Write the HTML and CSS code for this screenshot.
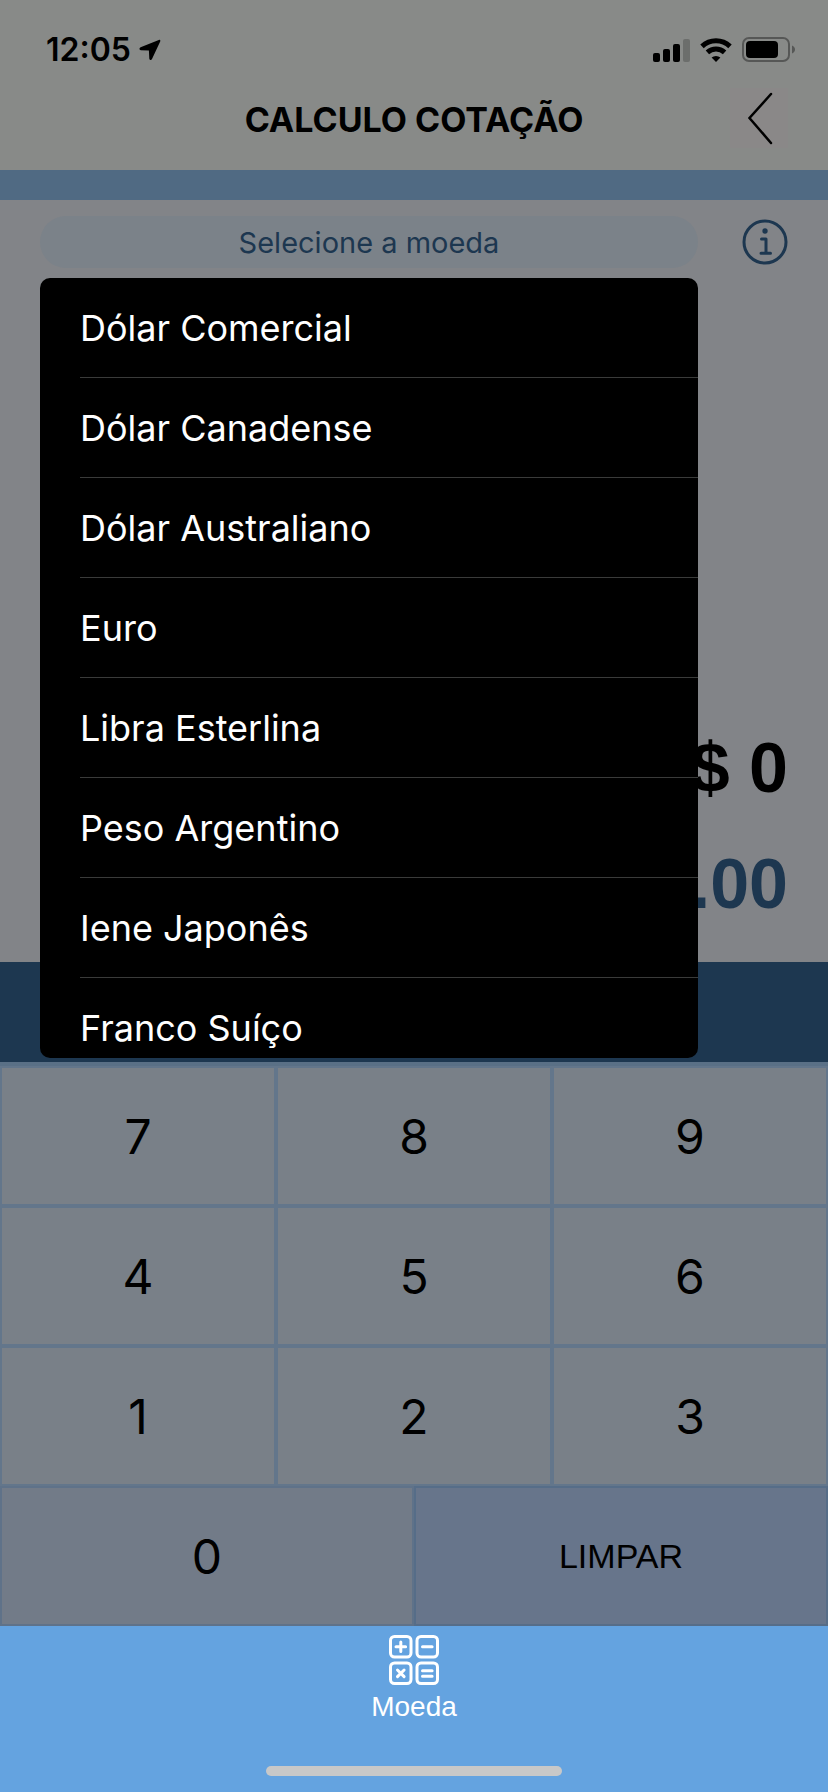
FILE: index.html
```html
<!DOCTYPE html>
<html lang="pt-BR">
<head>
<meta charset="utf-8">
<meta name="viewport" content="width=device-width, initial-scale=1">
<title>Calculo Cotação</title>
<link rel="stylesheet" href="styles.css">
</head>
<body>
<div class="app">
  <header class="header">
    <div class="status">
      <div class="status-left">
        <span class="clock">12:05</span>
        <svg class="location" viewBox="0 0 22 22" aria-hidden="true"><path d="M19.800.900 1.600 8.300c-1.700.8-1.400 2.800.3 2.900l8 .3.400 8c.1 1.800 2.100 2 2.700.4L21.200 2.400c.5-1.200-.3-2-1.400-1.500z"/></svg>
      </div>
      <div class="status-right">
        <svg class="signal" viewBox="0 0 37 24" aria-hidden="true"><rect x="0" y="15" width="7" height="9" rx="2"/><rect x="10" y="11" width="7" height="13" rx="2"/><rect x="20" y="6" width="7" height="18" rx="2"/><rect class="faint" x="30" y="1" width="7" height="23" rx="2"/></svg>
        <svg class="wifi" viewBox="0 0 32 24" aria-hidden="true"><path class="arc" d="M2 8.300a20.500 20.500 0 0 1 28 0M7.400 14.400a12.600 12.600 0 0 1 17.200 0"/><path d="M16 24l-4.400-4.400a6.500 6.500 0 0 1 8.800 0z"/></svg>
        <svg class="battery" viewBox="0 0 54 26" aria-hidden="true"><rect class="shell" x="1" y="1" width="46" height="23" rx="6"/><rect x="4" y="4" width="32" height="17" rx="4"/><path class="cap" d="M50 8.500c4 1.500 4 6.500 0 8z"/></svg>
      </div>
    </div>
    <div class="navbar">
      <h1 class="title">CALCULO COTAÇÃO</h1>
      <button class="back" type="button" aria-label="Voltar">
        <svg viewBox="0 0 58 60" aria-hidden="true"><path d="M41 6 19.500 30 41 55"/></svg>
      </button>
    </div>
  </header>
  <div class="band"></div>

  <main class="main">
    <section class="quote">
      <div class="picker-row">
        <div class="picker">
          <button class="picker-button" type="button" aria-haspopup="listbox" aria-expanded="true" aria-controls="moedas">Selecione a moeda</button>
          <ul class="options" id="moedas" role="listbox" aria-label="Moedas">
            <li class="option" role="option">Dólar Comercial</li>
            <li class="option" role="option">Dólar Canadense</li>
            <li class="option" role="option">Dólar Australiano</li>
            <li class="option" role="option">Euro</li>
            <li class="option" role="option">Libra Esterlina</li>
            <li class="option" role="option">Peso Argentino</li>
            <li class="option" role="option">Iene Japonês</li>
            <li class="option" role="option">Franco Suíço</li>
          </ul>
        </div>
        <button class="info" type="button" aria-label="Informações">
          <svg viewBox="0 0 46 46" aria-hidden="true"><circle class="ring" cx="23" cy="23" r="21"/><circle class="dot" cx="23" cy="12" r="2.700"/><path class="stem" d="M19.500 20H24v14.200M19 34.200h9.500"/></svg>
        </button>
      </div>
      <div class="amounts">
        <output class="amount">$ 0</output>
        <output class="amount amount-result">.00</output>
      </div>
    </section>
    <div class="divider"></div>
    <section class="keypad" aria-label="Teclado">
      <button class="key" type="button">7</button>
      <button class="key" type="button">8</button>
      <button class="key" type="button">9</button>
      <button class="key" type="button">4</button>
      <button class="key" type="button">5</button>
      <button class="key" type="button">6</button>
      <button class="key" type="button">1</button>
      <button class="key" type="button">2</button>
      <button class="key" type="button">3</button>
      <button class="key key-zero" type="button">0</button>
      <button class="key key-clear" type="button">LIMPAR</button>
    </section>
  </main>

  <nav class="tabbar">
    <a class="tab" href="#moeda">
      <svg class="tab-icon" viewBox="0 0 50 50" aria-hidden="true"><rect x="1.500" y="1.500" width="20.500" height="20.500" rx="4"/><rect x="28" y="1.500" width="20.500" height="20.500" rx="4"/><rect x="1.500" y="28" width="20.500" height="20.500" rx="4"/><rect x="28" y="28" width="20.500" height="20.500" rx="4"/><path d="M7 11.800h9.600M11.800 7v9.600M33.500 11.800h9.600M8.500 35l6.600 6.600M15.100 35l-6.600 6.600M33.500 35.700h9.600M33.500 41.300h9.600"/></svg>
      <span>Moeda</span>
    </a>
    <div class="home"></div>
  </nav>
</div>
</body>
</html>
```
FILE: styles.css
```css
* { box-sizing: border-box; }

body {
  margin: 0;
  background: #64a3e0;
  color: #000;
  font-family: Inter, "Liberation Sans", sans-serif;
}

button {
  margin: 0;
  padding: 0;
  border: 0;
  background: none;
  color: inherit;
  font: inherit;
  cursor: pointer;
}

svg { display: block; }

.app {
  display: flex;
  flex-direction: column;
  min-height: 100vh;
}

.header {
  padding-bottom: 18px;
  background: #888a88;
}

.status {
  display: flex;
  justify-content: space-between;
  padding: 30px 32px 0 46px;
  height: 88px;
}

.status-left,
.status-right {
  display: flex;
  align-items: center;
  height: 40px;
}

.status-left { gap: 8px; }
.status-right { gap: 10px; }

.clock {
  font-size: 32px;
  line-height: 40px;
  font-weight: 600;
}

.location { width: 22px; height: 22px; }
.signal { width: 37px; height: 24px; }
.signal .faint { fill: #6c6e6c; }
.wifi { width: 32px; height: 24px; }
.wifi .arc { fill: none; stroke: #000; stroke-width: 5; }
.battery { width: 54px; height: 26px; }
.battery .shell { fill: none; stroke: #565756; stroke-width: 2; }
.battery .cap { fill: #565756; }

.navbar {
  display: grid;
  grid-template-columns: 1fr auto 1fr;
  align-items: start;
  padding: 0 40px;
}

.title {
  grid-column: 2;
  margin: 0;
  font-size: 34px;
  line-height: 64px;
  font-weight: 700;
}

.back {
  justify-self: end;
  width: 58px;
  height: 60px;
  background: #8a8888;
}

.back svg {
  width: 58px;
  height: 60px;
  fill: none;
  stroke: #000;
  stroke-width: 2.500;
  stroke-linecap: round;
}

.band {
  height: 30px;
  background: #506a83;
}

.main {
  display: flex;
  flex: 1;
  flex-direction: column;
}

.quote {
  display: flex;
  flex: 1;
  flex-direction: column;
  justify-content: space-between;
  padding: 16px 40px 20px;
  background: #828488;
}

.picker-row {
  display: flex;
  align-items: center;
  gap: 44px;
}

.picker {
  position: relative;
  flex: 1;
}

.picker-button {
  display: block;
  width: 100%;
  height: 52px;
  border-radius: 26px;
  background: #7b8289;
  color: #1d3750;
  font-size: 29px;
}

.options {
  position: absolute;
  z-index: 1;
  top: 100%;
  left: 0;
  right: 0;
  height: 780px;
  margin: 10px 0 0;
  padding: 0 0 0 40px;
  overflow: hidden;
  border-radius: 10px;
  background: #000;
  color: #fff;
  list-style: none;
}

.option {
  height: 100px;
  border-bottom: 1px solid #3a3b3a;
  font-size: 36px;
  line-height: 100px;
}

.info {
  width: 46px;
  height: 46px;
  color: #1d3750;
}

.info svg { width: 46px; height: 46px; }
.info .ring { fill: none; stroke: currentColor; stroke-width: 3; }
.info .dot { fill: currentColor; }
.info .stem {
  fill: none;
  stroke: currentColor;
  stroke-width: 3;
  stroke-linecap: round;
  stroke-linejoin: round;
}

.amounts {
  display: flex;
  flex-direction: column;
  align-items: flex-end;
  font-family: "Liberation Sans", sans-serif;
}

.amount {
  font-size: 70px;
  line-height: 116px;
  font-weight: 700;
}

.amount-result { color: #1d3750; }

.divider {
  height: 104px;
  border-bottom: 4px solid #5a7086;
  background: #1d3750;
}

.keypad {
  display: grid;
  grid-template-columns: repeat(6, 1fr);
  grid-auto-rows: 140px;
}

.key {
  grid-column: span 2;
  border: 2px solid #63768b;
  background: #798088;
  font-size: 48px;
}

.key-zero {
  grid-column: span 3;
  border-color: #5f7289;
  background: #727b88;
}

.key-clear {
  grid-column: span 3;
  border-color: #566d88;
  background: #67758b;
  font-family: "Liberation Sans", sans-serif;
  font-size: 34px;
}

.tabbar {
  display: flex;
  flex-direction: column;
  align-items: center;
  justify-content: space-between;
  height: 166px;
  padding: 9px 0 16px;
  background: #64a3e0;
}

.tab {
  display: flex;
  flex-direction: column;
  align-items: center;
  gap: 6px;
  color: #fff;
  font-family: "Liberation Sans", sans-serif;
  font-size: 28px;
  line-height: 32px;
  text-decoration: none;
}

.tab-icon {
  width: 50px;
  height: 50px;
  fill: none;
  stroke: #fff;
  stroke-width: 3;
  stroke-linecap: round;
}

.home {
  width: 296px;
  height: 10px;
  border-radius: 5px;
  background: #c8c8c8;
}
```
